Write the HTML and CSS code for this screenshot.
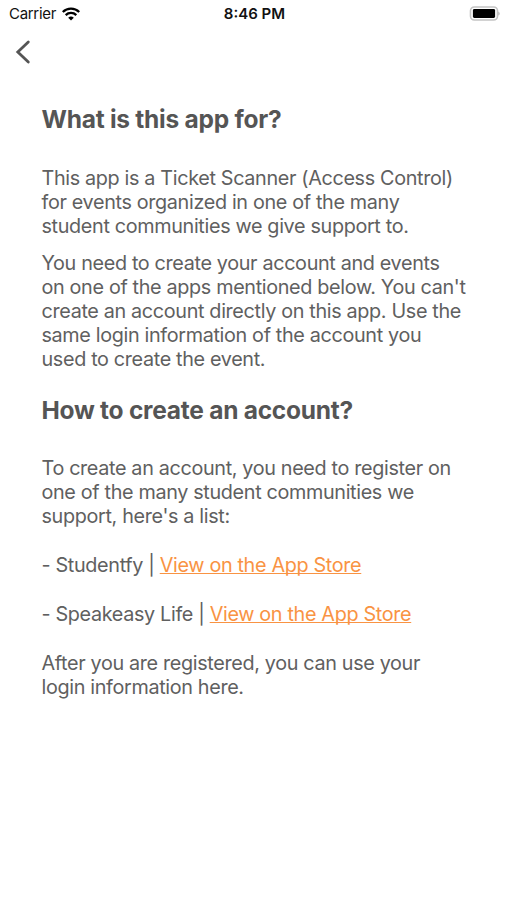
FILE: index.html
```html
<!DOCTYPE html>
<html lang="en">
<head>
    <meta charset="UTF-8">
    <meta name="viewport" content="width=device-width, initial-scale=1.0">
    <title>About</title>
    <link rel="stylesheet" href="styles.css">
</head>
<body>

    <div class="status">
        <div class="status--left">
            <span class="status--carrier">Carrier</span>
            <svg viewBox="0 0 18 14" width="18" height="14">
                <path d="M.8 5a11.7 11.7 0 0 1 16.4 0M3.7 8.1a7.6 7.6 0 0 1 10.6 0" fill="none" stroke="#000" stroke-width="2.3"/>
                <path d="M9 13.6L6.2 10.7a4.1 4.1 0 0 1 5.6 0z"/>
            </svg>
        </div>
        <span class="status--time">8:46 PM</span>
        <svg class="status--battery" viewBox="0 0 31 15" width="31" height="15">
            <rect x="1.5" y="1" width="27" height="13" rx="3.8" fill="#fff" stroke="#c4c4c4" stroke-width="1.6"/>
            <rect x="3.9" y="3" width="22.2" height="9" rx="1.4"/>
            <path d="M29.3 5.4c1.8.8 1.8 3.4 0 4.2z" fill="#b4b4b4"/>
        </svg>
    </div>

    <div class="nav">
        <a class="nav--back" href="#" aria-label="Back">
            <svg viewBox="0 0 16 24" width="16" height="24">
                <path d="M13.3 2L2.8 12l10.5 10" fill="none" stroke="#555" stroke-width="2.8" stroke-linecap="round"/>
            </svg>
        </a>
    </div>

    <div class="content">
        <h1>What is this app for?</h1>
        <p>
            This app is a Ticket Scanner (Access Control)<br>
            for events organized in one of the many<br>
            student communities we give support to.
        </p>
        <p>
            You need to create your account and events<br>
            on one of the apps mentioned below. You can't<br>
            create an account directly on this app. Use the<br>
            same login information of the account you<br>
            used to create the event.
        </p>
        <h1 class="second">How to create an account?</h1>
        <p>
            To create an account, you need to register on<br>
            one of the many student communities we<br>
            support, here's a list:
        </p>
        <p class="spaced">- Studentfy | <a href="#">View on the App Store</a></p>
        <p class="spaced">- Speakeasy Life | <a href="#">View on the App Store</a></p>
        <p class="spaced">
            After you are registered, you can use your<br>
            login information here.
        </p>
    </div>

</body>
</html>
```
FILE: styles.css
```css
body {
    margin: 0;
    font-family: Inter, sans-serif;
    font-size: 19.8px;
    line-height: 24px;
    letter-spacing: -.34px;
    color: #606060;
    background-color: #ffffff;
}

.status {
    display: grid;
    grid-template-columns: 1fr auto 1fr;
    align-items: center;
    height: 27px;
    padding: 0 7px 0 9px;
    font-size: 15px;
    line-height: 27px;
    letter-spacing: 0;
    color: #111111;
}

.status--left {
    display: flex;
    align-items: center;
    gap: 6px;
}

.status--carrier {
    letter-spacing: -.3px;
}

.status--time {
    font-weight: 600;
}

.status--battery {
    justify-self: end;
}

.nav {
    height: 50px;
    padding: 13px 15px 0;
    box-sizing: border-box;
}

.nav--back svg {
    display: block;
}

.content {
    padding: 28px 40px 0 41.5px;
    white-space: nowrap;
}

h1 {
    margin: 0 0 32px;
    font-size: 24.5px;
    line-height: 28px;
    font-weight: 700;
    letter-spacing: -.25px;
    color: #555555;
}

h1.second {
    margin-top: 25px;
}

p {
    margin: 0 0 12.5px;
}

h1 + p {
    padding-top: 1px;
}

h1.second + p {
    padding-top: 0;
}

p.spaced {
    margin: 25px 0 0;
}

a {
    color: #f99343;
    text-decoration-skip-ink: none;
    text-underline-offset: 1px;
}
```
